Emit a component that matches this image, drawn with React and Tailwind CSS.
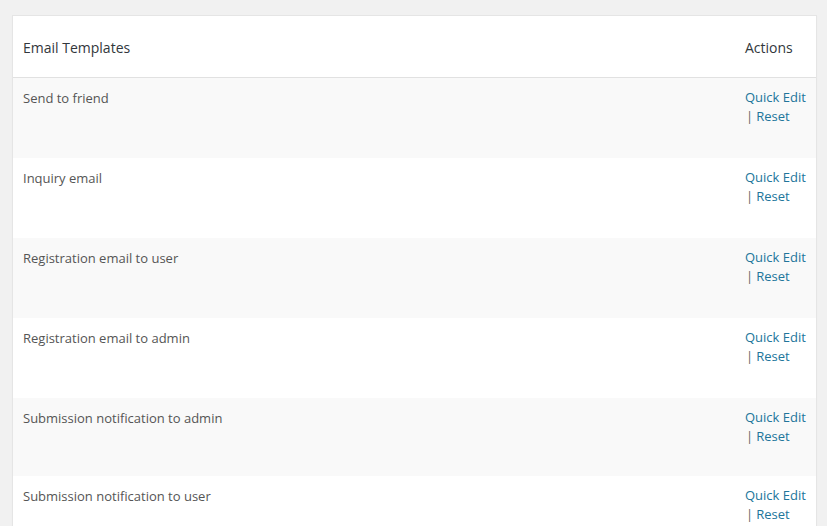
import React from "react";

const rows = [
  { name: "Send to friend", h: "h-[80px]" },
  { name: "Inquiry email", h: "h-[80px]" },
  { name: "Registration email to user", h: "h-[80px]" },
  { name: "Registration email to admin", h: "h-[80px]" },
  { name: "Submission notification to admin", h: "h-[78px]" },
  { name: "Submission notification to user", h: "h-[80px]" },
];

export default function App() {
  return (
    <div className="w-[827px] h-[526px] overflow-hidden bg-[#f1f1f1] pt-[15px] pl-[12px] pr-[10px] font-['Open_Sans',sans-serif]">
      <div className="border border-[#e5e5e5] bg-white shadow-[0_1px_1px_rgba(0,0,0,0.04)]">
        <div className="flex items-center h-[62px] border-b border-[#e1e1e1] text-[14px] text-[#32373c] px-[10px]">
          <div className="flex-1 pt-[1px]">Email Templates</div>
          <div className="w-[61px] pt-[1px]">Actions</div>
        </div>
        {rows.map((r, i) => (
          <div
            key={i}
            className={`flex ${i % 2 === 0 ? "bg-[#f9f9f9]" : "bg-white"} ${r.h} px-[10px] pt-[10px] text-[13px] leading-[19px]`}
          >
            <div className="flex-1 text-[#555555] pt-[1px]">{r.name}</div>
            <div className="w-[61px] text-[#21759b]">
              <div>Quick Edit</div>
              <div>
                <span className="text-[#666666] pl-[1px]">|</span>
                <span className="pl-[3px]">Reset</span>
              </div>
            </div>
          </div>
        ))}
      </div>
    </div>
  );
}
